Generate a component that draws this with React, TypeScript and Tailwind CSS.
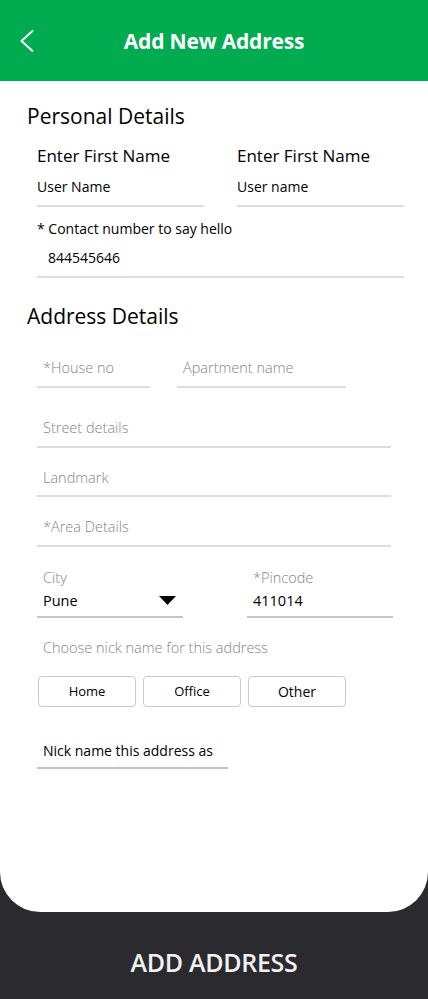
function Line({ label, className }: { label: string; className?: string }) {
    return (
        <div className={`border-b-2 border-[#dddddd] ${className ?? ''}`}>
            <div className='pl-[6px] pb-[7px] text-[14.5px] text-[#858585] font-light'>{label}</div>
        </div>
    )
}

export default function App() {
    return (
        <div className="w-[428px] h-[999px] bg-[#2b2a2f] flex flex-col" style={{ fontFamily: '"Open Sans", "Noto Sans", sans-serif' }}>
            <div className='bg-white rounded-b-[40px] h-[912px] flex flex-col'>
                <header className='bg-[#00ac4f] h-[81px] flex items-center relative'>
                    <svg className='ml-[19px]' width='16' height='24' viewBox='0 0 16 24'>
                        <polyline points='14,1.5 2.5,12 14,22.5' fill='none' stroke='#fff' strokeWidth='2' />
                    </svg>
                    <h1 className='absolute left-0 right-0 text-center text-white font-bold text-[21px] tracking-[-0.2px] pt-[2px]'>Add New Address</h1>
                </header>

                <div className='pl-[27px] pt-[21px]'>
                    <h2 className='text-[21px] text-black leading-[28px]'>Personal Details</h2>

                    <div className='flex gap-[33px] pl-[10px] mt-[15px]'>
                        <div className='w-[167px] border-b-2 border-[#dddddd]'>
                            <div className='text-[17px] text-black leading-[22px]'>Enter First Name</div>
                            <div className='text-[14px] text-black mt-[9px] pb-[8px]'>User Name</div>
                        </div>
                        <div className='w-[167px] border-b-2 border-[#dddddd]'>
                            <div className='text-[17px] text-black leading-[22px]'>Enter First Name</div>
                            <div className='text-[14px] text-black mt-[9px] pb-[8px]'>User name</div>
                        </div>
                    </div>

                    <div className='ml-[10px] w-[367px] border-b-2 border-[#dddddd] mt-[11px]'>
                        <div className='text-[14px] text-black'>* Contact number to say hello</div>
                        <div className='text-[14px] text-black pl-[11px] mt-[8px] pb-[8px]'>844545646</div>
                    </div>

                    <h2 className='text-[21px] text-black leading-[28px] mt-[24px]'>Address Details</h2>

                    <div className='pl-[10px]'>
                        <div className='flex gap-[27px] mt-[27px]'>
                            <Line label='*House no' className='w-[113px]' />
                            <Line label='Apartment name' className='w-[169px]' />
                        </div>
                        <Line label='Street details' className='w-[354px] mt-[29px]' />
                        <Line label='Landmark' className='w-[354px] mt-[19px]' />
                        <Line label='*Area Details' className='w-[354px] mt-[19px]' />

                        <div className='flex gap-[64px] mt-[20px]'>
                            <div className='w-[146px] border-b-2 border-[#c4c4c4]'>
                                <div className='pl-[6px] text-[14.5px] text-[#858585] font-light'>City</div>
                                <div className='pl-[6px] pr-[7px] flex items-center justify-between text-[14.5px] text-black pt-[1px] pb-[4px]'>
                                    <span>Pune</span>
                                    <svg width='17' height='9' viewBox='0 0 17 9'><path d='M0 0H17L8.5 9Z' fill='#000' /></svg>
                                </div>
                            </div>
                            <div className='w-[146px] border-b-2 border-[#c4c4c4]'>
                                <div className='pl-[6px] text-[14.5px] text-[#858585] font-light'>*Pincode</div>
                                <div className='pl-[6px] text-[14.5px] text-black pt-[1px] pb-[4px]'>411014</div>
                            </div>
                        </div>

                        <div className='pl-[6px] mt-[19px] text-[14.5px] text-[#858585] font-light'>Choose nick name for this address</div>

                        <div className='flex gap-[7px] mt-[18px] pl-[1px]'>
                            <button className='w-[98px] h-[31px] border border-[#c8c8c8] rounded-[4px] text-[13px] text-black'>Home</button>
                            <button className='w-[98px] h-[31px] border border-[#c8c8c8] rounded-[4px] text-[13px] text-black'>Office</button>
                            <button className='w-[98px] h-[31px] border border-[#c8c8c8] rounded-[4px] text-[14px] text-black'>Other</button>
                        </div>

                        <div className='w-[191px] border-b-2 border-[#c4c4c4] mt-[33px]'>
                            <div className='pl-[6px] pb-[6px] text-[14px] text-black'>Nick name this address as</div>
                        </div>
                    </div>
                </div>
            </div>

            <div className='flex-1 flex items-center justify-center pt-[14px]'>
                <span className='text-[#f2f2f2] text-[25px] font-semibold tracking-[-0.3px]'>ADD ADDRESS</span>
            </div>
        </div>
    )
}
